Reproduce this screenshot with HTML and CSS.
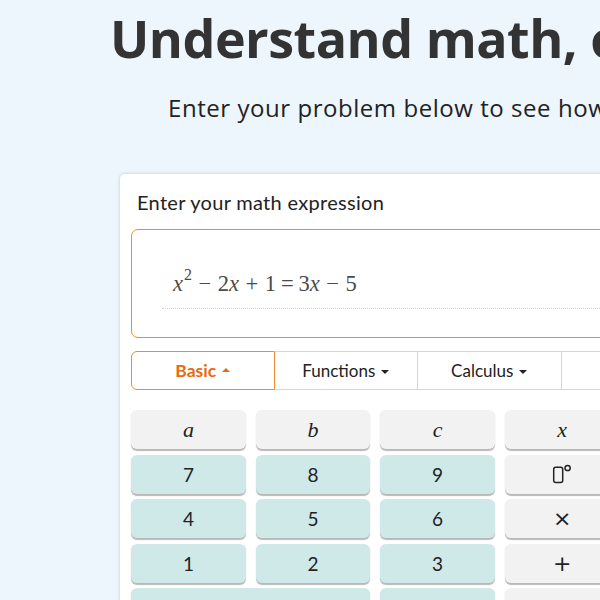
FILE: index.html
```html
<!DOCTYPE html>
<html lang="en">
<head>
<meta charset="utf-8">
<title>Understand math</title>
<link rel="stylesheet" href="styles.css">
</head>
<body>
<main class="page">
  <header class="hero">
    <h1 class="title">Understand math, one step at a time</h1>
    <p class="subtitle">Enter your problem below to see how to solve it step by step</p>
  </header>
  <section class="card">
    <div class="card-label">Enter your math expression</div>
    <div class="editor">
      <div class="math-field">
        <span class="mi">x</span><sup class="sup">2</sup><span class="bin">−</span><span class="mn">2</span><span class="mi">x</span><span class="bin">+</span><span class="mn">1</span><span class="rel">=</span><span class="mn">3</span><span class="mi">x</span><span class="bin">−</span><span class="mn">5</span>
      </div>
    </div>
    <nav class="tabs">
      <button class="tab tab-active">Basic <span class="caret caret-up"></span></button>
      <button class="tab">Functions <span class="caret"></span></button>
      <button class="tab">Calculus <span class="caret"></span></button>
      <button class="tab">Matrix <span class="caret"></span></button>
    </nav>
    <div class="keypad">
      <button class="key key-gray var">a</button>
      <button class="key key-gray var">b</button>
      <button class="key key-gray var">c</button>
      <button class="key key-gray var">x</button>
      <button class="key key-gray var">y</button>
      <button class="key key-gray op">(</button>
      <button class="key key-gray op">)</button>
      <button class="key key-gray op">&lt;</button>

      <button class="key key-teal">7</button>
      <button class="key key-teal">8</button>
      <button class="key key-teal">9</button>
      <button class="key key-gray"><svg class="deg-icon" width="20" height="20" viewBox="0 0 20 20"><rect x="1.7" y="3.2" width="9" height="15.2" rx="2" fill="none" stroke="#222" stroke-width="1.5"/><circle cx="15.6" cy="4" r="2.6" fill="none" stroke="#222" stroke-width="1.5"/></svg></button>
      <button class="key key-gray op">√</button>
      <button class="key key-gray op">π</button>
      <button class="key key-gray op">|x|</button>
      <button class="key key-gray op">&gt;</button>

      <button class="key key-teal">4</button>
      <button class="key key-teal">5</button>
      <button class="key key-teal">6</button>
      <button class="key key-gray op">×</button>
      <button class="key key-gray op">÷</button>
      <button class="key key-gray op">%</button>
      <button class="key key-gray op">≤</button>
      <button class="key key-gray op">≥</button>

      <button class="key key-teal">1</button>
      <button class="key key-teal">2</button>
      <button class="key key-teal">3</button>
      <button class="key key-gray op">+</button>
      <button class="key key-gray op">−</button>
      <button class="key key-gray op">=</button>
      <button class="key key-gray op">,</button>
      <button class="key key-gray op">!</button>

      <button class="key key-teal key-wide">0</button>
      <button class="key key-teal">.</button>
      <button class="key key-gray op">e</button>
      <button class="key key-gray op">∞</button>
      <button class="key key-gray op">i</button>
      <button class="key key-gray op">←</button>
      <button class="key key-gray op">→</button>
    </div>
  </section>
</main>
</body>
</html>
```

FILE: styles.css
```css
html, body {
  margin: 0;
  padding: 0;
}

body {
  background: #edf6fc;
  font-family: Lato, "Open Sans", sans-serif;
  color: #222;
  overflow: hidden;
  width: 600px;
  height: 600px;
}

.page {
  width: 1300px;
}

.hero {
  padding-top: 7px;
}

.title {
  margin: 0;
  padding-left: 110px;
  font-family: "Open Sans", Lato, sans-serif;
  font-size: 52px;
  line-height: 61px;
  font-weight: 700;
  letter-spacing: -0.5px;
  color: #333;
  white-space: nowrap;
}

.subtitle {
  margin: 25px 0 0;
  padding-left: 168px;
  font-family: "Open Sans", Lato, sans-serif;
  font-size: 24px;
  line-height: 29px;
  letter-spacing: 0.55px;
  color: #222;
  white-space: nowrap;
}

.card {
  margin: 51px 0 0 119px;
  width: 1000px;
  background: #fff;
  border: 1px solid #dbe5ea;
  border-radius: 6px;
  box-shadow: 0 0 3px rgba(120, 150, 170, 0.25);
  padding: 16px 11px 20px;
  box-sizing: border-box;
}

.card-label {
  font-size: 20px;
  line-height: 24px;
  letter-spacing: 0.3px;
  color: #222;
  padding-left: 6px;
  margin-bottom: 15px;
}

.editor {
  height: 109px;
  box-sizing: border-box;
  border: 1px solid #f08a2c;
  border-radius: 7px;
  padding: 39px 0 0 30px;
}

.math-field {
  font-family: "Liberation Serif", "Times New Roman", serif;
  font-size: 22.5px;
  line-height: 30px;
  color: #4a4a4a;
  padding: 0 0 9px 11px;
  border-bottom: 1px dotted #cfcfcf;
  white-space: nowrap;
}

.mi {
  font-style: italic;
}

.sup {
  font-size: 16px;
  vertical-align: 11px;
  line-height: 0;
  margin-left: 1px;
}

.bin {
  margin: 0 6.5px;
}

.rel {
  margin: 0 5px;
}

.tabs {
  display: flex;
  margin-top: 13px;
  height: 39px;
}

.tab {
  flex: 0 0 143.5px;
  box-sizing: border-box;
  height: 39px;
  border: 1px solid #d6d6d6;
  border-left: none;
  background: #fff;
  font-family: Lato, sans-serif;
  font-size: 17px;
  color: #222;
  display: flex;
  align-items: center;
  justify-content: center;
  gap: 6px;
  padding: 0;
}

.tab-active {
  border: 1px solid #ef8a36;
  border-radius: 6px 0 0 6px;
  color: #e8690e;
  font-weight: 700;
  font-size: 17.5px;
}

.caret {
  width: 0;
  height: 0;
  border-left: 4px solid transparent;
  border-right: 4px solid transparent;
  border-top: 4px solid currentColor;
  margin-top: 2px;
}

.caret-up {
  border-top: none;
  border-bottom: 4px solid currentColor;
  margin-top: -2px;
}

.keypad {
  display: grid;
  grid-template-columns: repeat(8, 114.8px);
  grid-auto-rows: 39px;
  column-gap: 9.8px;
  row-gap: 5.5px;
  margin-top: 20px;
}

.key {
  border: none;
  border-radius: 6px;
  font-family: Lato, sans-serif;
  font-size: 19px;
  color: #222;
  display: flex;
  align-items: center;
  justify-content: center;
  padding: 0;
  box-shadow: 0 1.5px 1px rgba(0, 0, 0, 0.28);
}

.key-gray {
  background: #f2f2f2;
}

.key-teal {
  background: #cfe9e9;
}

.key-wide {
  grid-column: span 2;
}

.var {
  font-family: "Liberation Serif", "Times New Roman", serif;
  font-style: italic;
  font-size: 22px;
}

.op {
  font-family: "DejaVu Sans", sans-serif;
  font-size: 22px;
}

.deg-icon {
  display: block;
}
```
